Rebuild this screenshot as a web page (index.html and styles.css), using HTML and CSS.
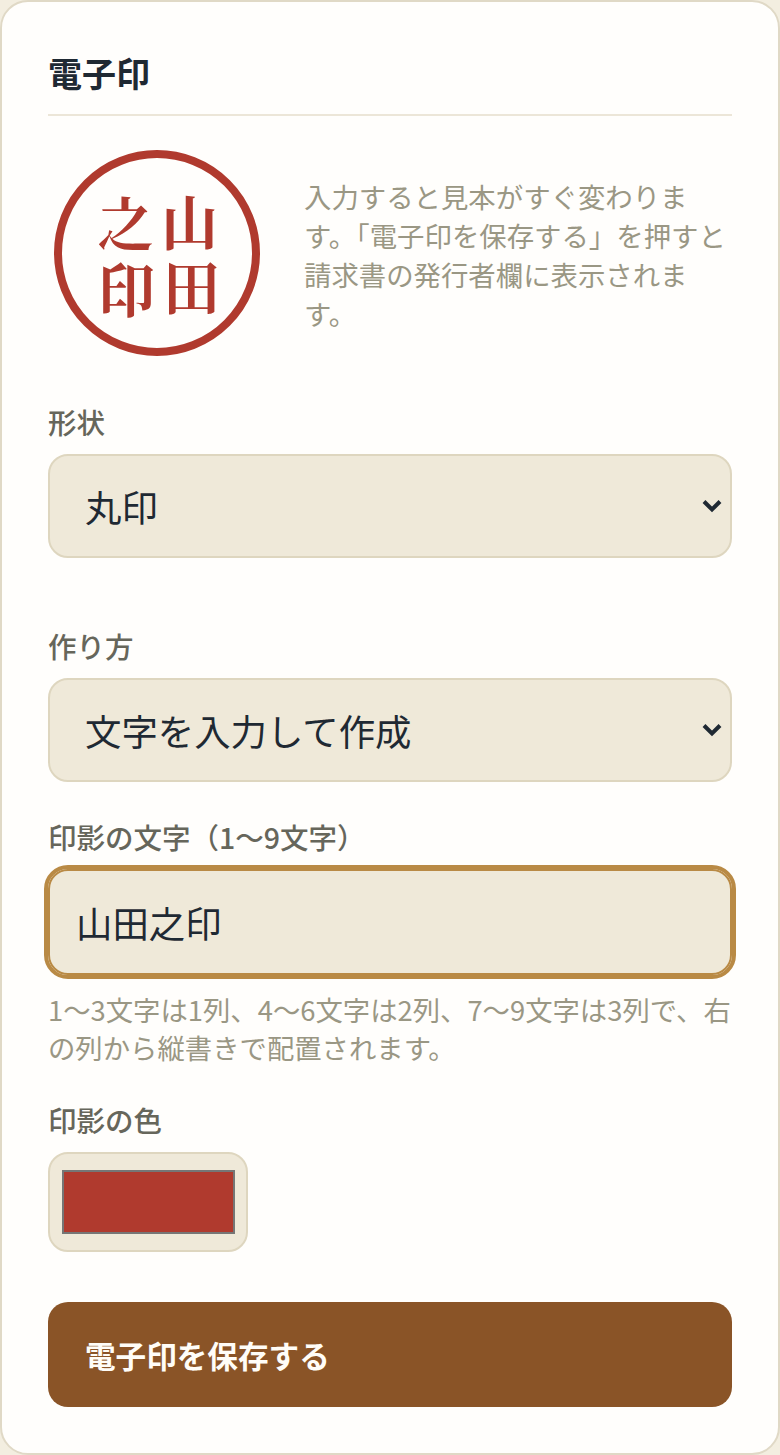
FILE: index.html
```html
<!DOCTYPE html>
<html lang="ja">
<head>
<meta charset="utf-8">
<title>電子印</title>
<link rel="stylesheet" href="styles.css">
</head>
<body>
<main class="card">
  <h2 class="title">電子印</h2>
  <div class="preview">
    <svg class="stamp" width="220" height="220" viewBox="0 0 220 220" aria-label="山田之印">
      <circle class="stamp-ring" cx="109" cy="110" r="99"/>
      <text class="stamp-char" transform="translate(141.5 102) scale(1.04 1.07)">山</text>
      <text class="stamp-char" transform="translate(143.5 167) scale(1.04 1.07)">田</text>
      <text class="stamp-char" transform="translate(77 103) scale(1.04 1.07)">之</text>
      <text class="stamp-char" transform="translate(78.5 169) scale(1.04 1.07)">印</text>
    </svg>
    <p class="desc">入力すると見本がすぐ変わります。「電子印を保存する」を押すと請求書の発行者欄に表示されます。</p>
  </div>

  <div class="field field-shape">
    <label class="label" for="shape">形状</label>
    <div class="select-wrap">
      <select id="shape" class="control select"><option>丸印</option><option>角印</option></select>
      <svg class="chevron" width="22" height="16" viewBox="0 0 22 16"><path d="M3 3.5l8 8 8-8" fill="none" stroke="#1f2933" stroke-width="4"/></svg>
    </div>
  </div>

  <div class="field field-method">
    <label class="label" for="method">作り方</label>
    <div class="select-wrap">
      <select id="method" class="control select"><option>文字を入力して作成</option><option>画像をアップロード</option></select>
      <svg class="chevron" width="22" height="16" viewBox="0 0 22 16"><path d="M3 3.5l8 8 8-8" fill="none" stroke="#1f2933" stroke-width="4"/></svg>
    </div>
  </div>

  <div class="field field-text">
    <label class="label" for="chars">印影の文字（1〜9文字）</label>
    <input id="chars" class="control input" type="text" value="山田之印">
    <p class="hint">1〜3文字は1列、4〜6文字は2列、7〜9文字は3列で、右の列から縦書きで配置されます。</p>
  </div>

  <div class="field field-color">
    <label class="label" for="color">印影の色</label>
    <input id="color" class="color" type="color" value="#b03a2e">
  </div>

  <button class="save" type="button">電子印を保存する</button>
</main>
</body>
</html>
```

FILE: styles.css
```css
* { box-sizing: border-box; }
html, body { margin: 0; padding: 0; }
body {
  background: #f3eee0;
  font-family: "Noto Sans CJK JP", "Noto Sans", sans-serif;
  color: #1f2933;
}
.card {
  width: 780px;
  height: 1455px;
  background: #fffefc;
  border: 2px solid #e0d9c6;
  border-radius: 28px;
  padding: 46px 46px 0;
}
.title {
  margin: 0;
  font-size: 34px;
  font-weight: 700;
  line-height: 50px;
  padding-bottom: 16px;
  border-bottom: 2px solid #ece6d8;
}
.preview {
  display: flex;
  align-items: center;
  gap: 36px;
  margin-top: 27px;
}
.stamp { flex: none; display: block; }
.stamp-ring { fill: none; stroke: #b03a2e; stroke-width: 8; }
.stamp-char {
  fill: #b03a2e;
  font-family: "Noto Serif CJK JP", "Noto Sans CJK JP", serif;
  font-weight: 700;
  font-size: 55px;
  text-anchor: middle;
}
.desc {
  margin: 0;
  width: 428px;
  padding-top: 3px;
  font-size: 27.4px;
  line-height: 39px;
  color: #9a9784;
}
.field { display: block; }
.field-shape { margin-top: 39px; }
.field-method { margin-top: 68px; }
.field-text { margin-top: 35px; }
.field-color { margin-top: 34px; }
.label {
  display: block;
  font-size: 28.5px;
  font-weight: 500;
  line-height: 40px;
  color: #66665b;
  margin-bottom: 12px;
}
.control {
  display: block;
  width: 100%;
  height: 104px;
  background: #efe9d9;
  border: 2px solid #ded6bf;
  border-radius: 20px;
  color: #1f2933;
  font-family: inherit;
  font-size: 36.4px;
}
.select-wrap { position: relative; }
.select {
  appearance: none;
  padding: 0 60px 0 35px;
}
.chevron {
  position: absolute;
  right: 9px;
  top: 44px;
  pointer-events: none;
}
.input {
  height: 106px;
  padding: 0 26px;
  border-color: #b98a45;
  outline: 4px solid #b98a45;
}
.hint {
  margin: 15px 0 0;
  font-size: 27.36px;
  line-height: 38px;
  color: #9a9784;
}
.color {
  display: block;
  width: 200px;
  height: 100px;
  padding: 16px 11px 16px 12px;
  background: #efe9d9;
  border: 2px solid #ded6bf;
  border-radius: 20px;
  appearance: none;
}
.color::-webkit-color-swatch-wrapper { padding: 0; }
.color::-webkit-color-swatch { border: 2px solid #767676; border-radius: 0; }
.save {
  display: block;
  width: 100%;
  height: 105px;
  margin-top: 50px;
  padding: 0 37px;
  text-align: left;
  background: #8a5427;
  color: #fffdf8;
  border: 0;
  border-radius: 20px;
  font-family: inherit;
  font-size: 30.6px;
  font-weight: 700;
}
```
